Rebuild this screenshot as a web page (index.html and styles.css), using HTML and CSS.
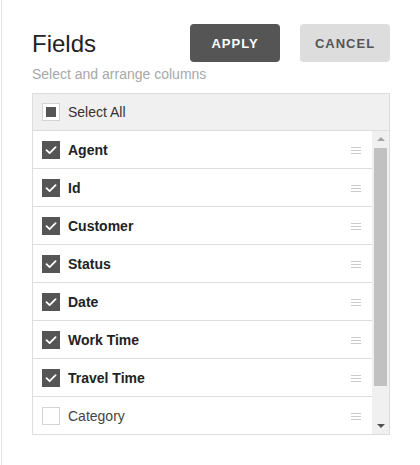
FILE: index.html
```html
<!DOCTYPE html>
<html>
<head>
<meta charset="utf-8">
<link rel="stylesheet" href="styles.css">
</head>
<body>
<div class="page">
  <div class="top">
    <h1 class="title">Fields</h1>
    <div class="actions">
      <button class="btn btn-apply">APPLY</button>
      <button class="btn btn-cancel">CANCEL</button>
    </div>
  </div>
  <p class="subtitle">Select and arrange columns</p>
  <div class="list">
    <div class="list-head">
      <span class="cb cb-partial"><span class="cb-dot"></span></span>
      <span class="head-label">Select All</span>
    </div>
    <div class="list-body">
      <div class="rows">
        <div class="row"><span class="cb cb-on"><svg viewBox="0 0 18 18" width="18" height="18"><polyline points="4.5,9.2 7.6,12.2 13.6,6.2" /></svg></span><span class="label on">Agent</span><span class="handle"><i></i><i></i><i></i></span></div>
        <div class="row"><span class="cb cb-on"><svg viewBox="0 0 18 18" width="18" height="18"><polyline points="4.5,9.2 7.6,12.2 13.6,6.2" /></svg></span><span class="label on">Id</span><span class="handle"><i></i><i></i><i></i></span></div>
        <div class="row"><span class="cb cb-on"><svg viewBox="0 0 18 18" width="18" height="18"><polyline points="4.5,9.2 7.6,12.2 13.6,6.2" /></svg></span><span class="label on">Customer</span><span class="handle"><i></i><i></i><i></i></span></div>
        <div class="row"><span class="cb cb-on"><svg viewBox="0 0 18 18" width="18" height="18"><polyline points="4.5,9.2 7.6,12.2 13.6,6.2" /></svg></span><span class="label on">Status</span><span class="handle"><i></i><i></i><i></i></span></div>
        <div class="row"><span class="cb cb-on"><svg viewBox="0 0 18 18" width="18" height="18"><polyline points="4.5,9.2 7.6,12.2 13.6,6.2" /></svg></span><span class="label on">Date</span><span class="handle"><i></i><i></i><i></i></span></div>
        <div class="row"><span class="cb cb-on"><svg viewBox="0 0 18 18" width="18" height="18"><polyline points="4.5,9.2 7.6,12.2 13.6,6.2" /></svg></span><span class="label on">Work Time</span><span class="handle"><i></i><i></i><i></i></span></div>
        <div class="row"><span class="cb cb-on"><svg viewBox="0 0 18 18" width="18" height="18"><polyline points="4.5,9.2 7.6,12.2 13.6,6.2" /></svg></span><span class="label on">Travel Time</span><span class="handle"><i></i><i></i><i></i></span></div>
        <div class="row last"><span class="cb"></span><span class="label">Category</span><span class="handle"><i></i><i></i><i></i></span></div>
      </div>
      <div class="scrollbar">
        <div class="sb-btn"><span class="arrow-up"></span></div>
        <div class="sb-track"><div class="sb-thumb"></div></div>
        <div class="sb-btn"><span class="arrow-down"></span></div>
      </div>
    </div>
  </div>
</div>
</body>
</html>
```
FILE: styles.css
```css
* { box-sizing: border-box; }
html, body { margin: 0; padding: 0; background: #fff; }
body { font-family: "Liberation Sans", Arial, sans-serif; }

.page {
  margin-left: 1px;
  border-left: 1px solid #e4e4e4;
  height: 465px;
  padding: 24px 30px 0 30px;
}

.top {
  display: flex;
  align-items: center;
  justify-content: space-between;
  height: 38px;
}
.title {
  margin: 0;
  font-size: 24px;
  font-weight: normal;
  color: #222;
  line-height: 28px;
  padding-top: 1px;
}
.actions { display: flex; gap: 20px; }
.btn {
  width: 90px;
  height: 38px;
  border: none;
  border-radius: 4px;
  font-family: "Liberation Sans", Arial, sans-serif;
  font-size: 13px;
  font-weight: bold;
  letter-spacing: 1px;
  padding: 0;
  padding-top: 1px;
}
.btn-apply { background: #555; color: #fff; }
.btn-cancel { background: #ddd; color: #555; }

.subtitle {
  margin: 4px 0 0 0;
  font-size: 14px;
  line-height: 16px;
  color: #a8a8a8;
}

.list {
  margin-top: 11px;
  border: 1px solid #ddd;
  width: 358px;
}
.list-head {
  display: flex;
  align-items: center;
  height: 37px;
  padding-left: 9px;
  background: #f0f0f0;
  border-bottom: 1px solid #ddd;
}
.head-label { margin-left: 8px; font-size: 14px; color: #333; }

.cb {
  width: 18px;
  height: 18px;
  flex: none;
  border: 1px solid #d4d4d4;
  background: #fff;
  display: flex;
  align-items: center;
  justify-content: center;
}
.cb-dot { width: 10px; height: 10px; background: #555; }
.cb-on { border: none; background: #555; }
.cb-on svg { display: block; }
.cb-on polyline {
  fill: none;
  stroke: #fff;
  stroke-width: 1.8;
  stroke-linecap: round;
  stroke-linejoin: round;
}

.list-body { display: flex; }
.rows { flex: 1; }
.row {
  display: flex;
  align-items: center;
  height: 38px;
  padding: 0 11px 0 9px;
  border-bottom: 1px solid #ddd;
}
.row.last { height: 37px; border-bottom: none; }
.label { margin-left: 8px; font-size: 14px; color: #444; flex: 1; }
.label.on { font-weight: bold; color: #222; }
.handle {
  display: flex;
  flex-direction: column;
  gap: 2px;
  width: 10px;
  margin-top: 1px;
}
.handle i { display: block; height: 1px; background: #cbcbcb; }

.scrollbar {
  width: 17px;
  background: #f0f0f0;
  display: flex;
  flex-direction: column;
}
.sb-btn {
  height: 17px;
  display: flex;
  align-items: center;
  justify-content: center;
}
.arrow-up {
  width: 0; height: 0;
  border-left: 4px solid transparent;
  border-right: 4px solid transparent;
  border-bottom: 4px solid #a3a3a3;
  margin-bottom: 2px;
}
.arrow-down {
  width: 0; height: 0;
  border-left: 4px solid transparent;
  border-right: 4px solid transparent;
  border-top: 4px solid #505050;
  margin-top: 0;
}
.sb-track { flex: 1; padding: 0 2px; }
.sb-thumb { height: 238px; background: #c1c1c1; }
```
